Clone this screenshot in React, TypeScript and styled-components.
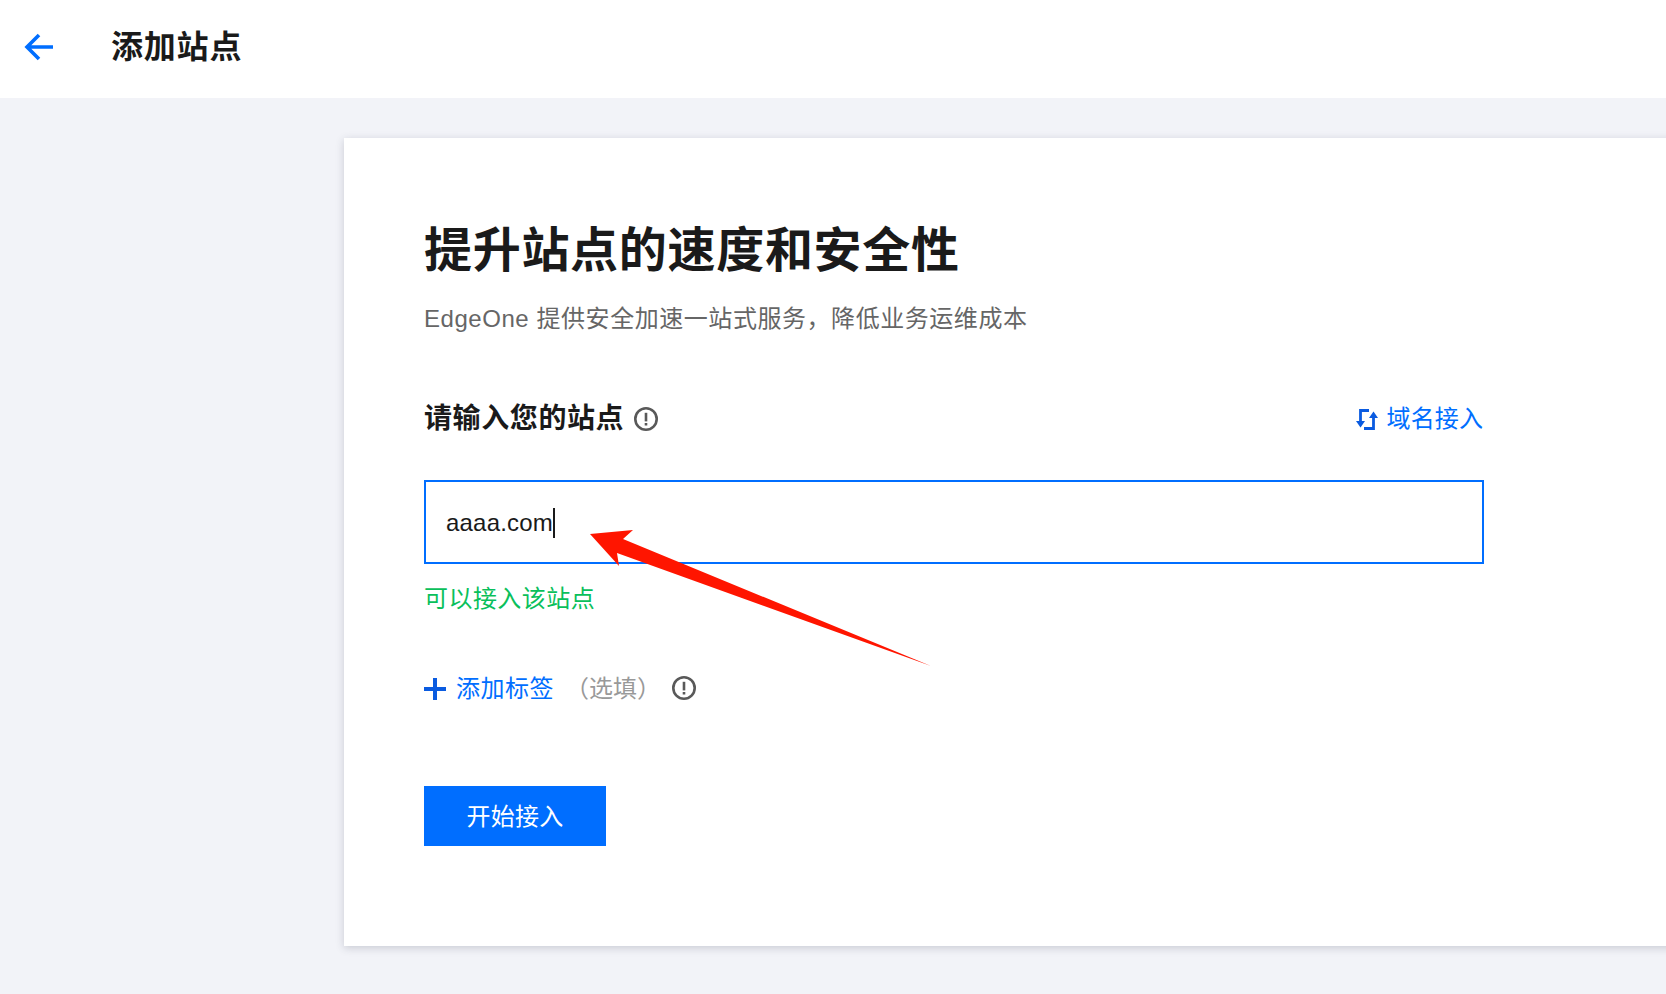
import React from "react";
import styled, { createGlobalStyle } from "styled-components";

const Global = createGlobalStyle`
  html, body { margin: 0; padding: 0; height: 100%; background: #f2f3f8; }
  #root { height: 100%; }
  * { box-sizing: border-box; }
`;

const FONT = `"Liberation Sans", "Noto Sans CJK SC", sans-serif`;

const Page = styled.div`
  width: 1666px;
  height: 994px;
  overflow: hidden;
  position: relative;
  background: #f2f3f8;
  font-family: ${FONT};
  color: #1a1a1a;
`;
const Header = styled.header`
  height: 98px;
  background: #fff;
  display: flex;
  align-items: center;
  padding: 0 0 4px 24px;
`;
const BackIcon = styled.svg`
  width: 30px;
  height: 30px;
  margin-right: 57px;
  flex-shrink: 0;
`;
const HeaderTitle = styled.h1`
  margin: 0;
  font-size: 32px;
  line-height: 44px;
  font-weight: 700;
  letter-spacing: 0.8px;
  color: #1a1a1a;
`;
const Main = styled.main`
  padding: 40px 0 0 344px;
`;
const Card = styled.section`
  width: 1400px;
  height: 808px;
  background: #fff;
  box-shadow: 0 2px 8px rgba(54, 58, 80, 0.22);
  padding: 78px 0 0 80px;
`;
const Content = styled.div`
  width: 1060px;
`;
const Title = styled.h2`
  margin: 0;
  font-size: 48px;
  line-height: 70px;
  font-weight: 700;
  letter-spacing: 0.7px;
  color: #1a1a1a;
`;
const Subtitle = styled.p`
  margin: 15px 0 0;
  font-size: 24px;
  line-height: 36px;
  color: #666;
  letter-spacing: 0.55px;
`;
const LabelRow = styled.div`
  margin-top: 62px;
  height: 40px;
  display: flex;
  align-items: center;
  justify-content: space-between;
`;
const LabelGroup = styled.div`
  display: flex;
  align-items: center;
  gap: 9px;
`;
const Label = styled.span`
  font-size: 28px;
  font-weight: 700;
  line-height: 40px;
  letter-spacing: 0.6px;
  color: #1a1a1a;
`;
const InfoIcon = styled.svg`
  width: 26px;
  height: 26px;
  flex-shrink: 0;
`;
const LinkButton = styled.a`
  display: flex;
  align-items: center;
  gap: 9px;
  padding-right: 1px;
  font-size: 24px;
  line-height: 36px;
  color: #006eff;
  letter-spacing: 0.1px;
`;
const SwapIcon = styled.svg`
  width: 22px;
  height: 21px;
  margin-left: -1px;
  flex-shrink: 0;
`;
const InputBox = styled.div`
  margin-top: 41px;
  height: 84px;
  border: 2px solid #006eff;
  display: flex;
  align-items: center;
  padding: 2px 0 0 20px;
  font-size: 24px;
  letter-spacing: 0.2px;
  color: #1a1a1a;
`;
const Caret = styled.span`
  display: inline-block;
  width: 2px;
  height: 30px;
  background: #1a1a1a;
`;
const Hint = styled.div`
  margin-top: 17px;
  font-size: 24px;
  line-height: 36px;
  letter-spacing: 0.45px;
  color: #0abf5b;
`;
const TagRow = styled.div`
  margin-top: 52px;
  height: 40px;
  display: flex;
  align-items: center;
`;
const PlusIcon = styled.svg`
  width: 22px;
  height: 22px;
  margin-right: 10px;
  flex-shrink: 0;
`;
const TagLink = styled.span`
  font-size: 24px;
  line-height: 36px;
  letter-spacing: 0.5px;
  color: #006eff;
`;
const Optional = styled.span`
  font-size: 24px;
  line-height: 36px;
  color: #999;
  margin: 0 10px 0 11px;
`;
const TagInfoWrap = styled.span`
  display: flex;
  margin-bottom: 2px;
`;
const StartButton = styled.button`
  display: block;
  margin-top: 77px;
  width: 182px;
  height: 60px;
  border: none;
  border-radius: 0;
  background: #006eff;
  color: #fff;
  font-family: ${FONT};
  font-size: 24px;
  letter-spacing: 0.3px;
  padding: 0 0 3px;
`;
const Annotation = styled.svg`
  position: absolute;
  left: 0;
  top: 0;
  width: 1666px;
  height: 994px;
  pointer-events: none;
`;

const Info = () => (
  <InfoIcon viewBox="0 0 26 26" fill="none">
    <circle cx="13" cy="13" r="10.7" stroke="#595959" strokeWidth="2.6" />
    <rect x="11.7" y="6.8" width="2.6" height="8.6" fill="#595959" />
    <rect x="11.7" y="17" width="2.6" height="2.5" fill="#595959" />
  </InfoIcon>
);

export default function App() {
  return (
    <Page>
      <Global />
      <Header>
        <BackIcon viewBox="0 0 30 30" fill="none">
          <path d="M29 15H3M15 3L3 15l12 12" stroke="#006eff" strokeWidth="3.6" />
        </BackIcon>
        <HeaderTitle>添加站点</HeaderTitle>
      </Header>
      <Main>
        <Card>
          <Content>
            <Title>提升站点的速度和安全性</Title>
            <Subtitle>EdgeOne 提供安全加速一站式服务，降低业务运维成本</Subtitle>
            <LabelRow>
              <LabelGroup>
                <Label>请输入您的站点</Label>
                <Info />
              </LabelGroup>
              <LinkButton>
                <SwapIcon viewBox="0 0 22 21" fill="none">
                  <path d="M4.5 13V1.5H13" stroke="#0a5be0" strokeWidth="2.8" />
                  <path d="M0 12h9l-4.5 6.5z" fill="#0a5be0" />
                  <path d="M17.5 8v11.5H8" stroke="#0a5be0" strokeWidth="2.8" />
                  <path d="M13 9h9l-4.5-6.5z" fill="#0a5be0" />
                </SwapIcon>
                域名接入
              </LinkButton>
            </LabelRow>
            <InputBox>
              aaaa.com
              <Caret />
            </InputBox>
            <Hint>可以接入该站点</Hint>
            <TagRow>
              <PlusIcon viewBox="0 0 22 22">
                <path d="M9 0h4v9h9v4h-9v9H9v-9H0V9h9z" fill="#0a5be0" />
              </PlusIcon>
              <TagLink>添加标签</TagLink>
              <Optional>（选填）</Optional>
              <TagInfoWrap>
                <Info />
              </TagInfoWrap>
            </TagRow>
            <StartButton>开始接入</StartButton>
          </Content>
        </Card>
      </Main>
      <Annotation viewBox="0 0 1666 994">
        <path d="M590 534L633 530L623 539L931 666L617 553L619 566Z" fill="#ff1500" />
      </Annotation>
    </Page>
  );
}
